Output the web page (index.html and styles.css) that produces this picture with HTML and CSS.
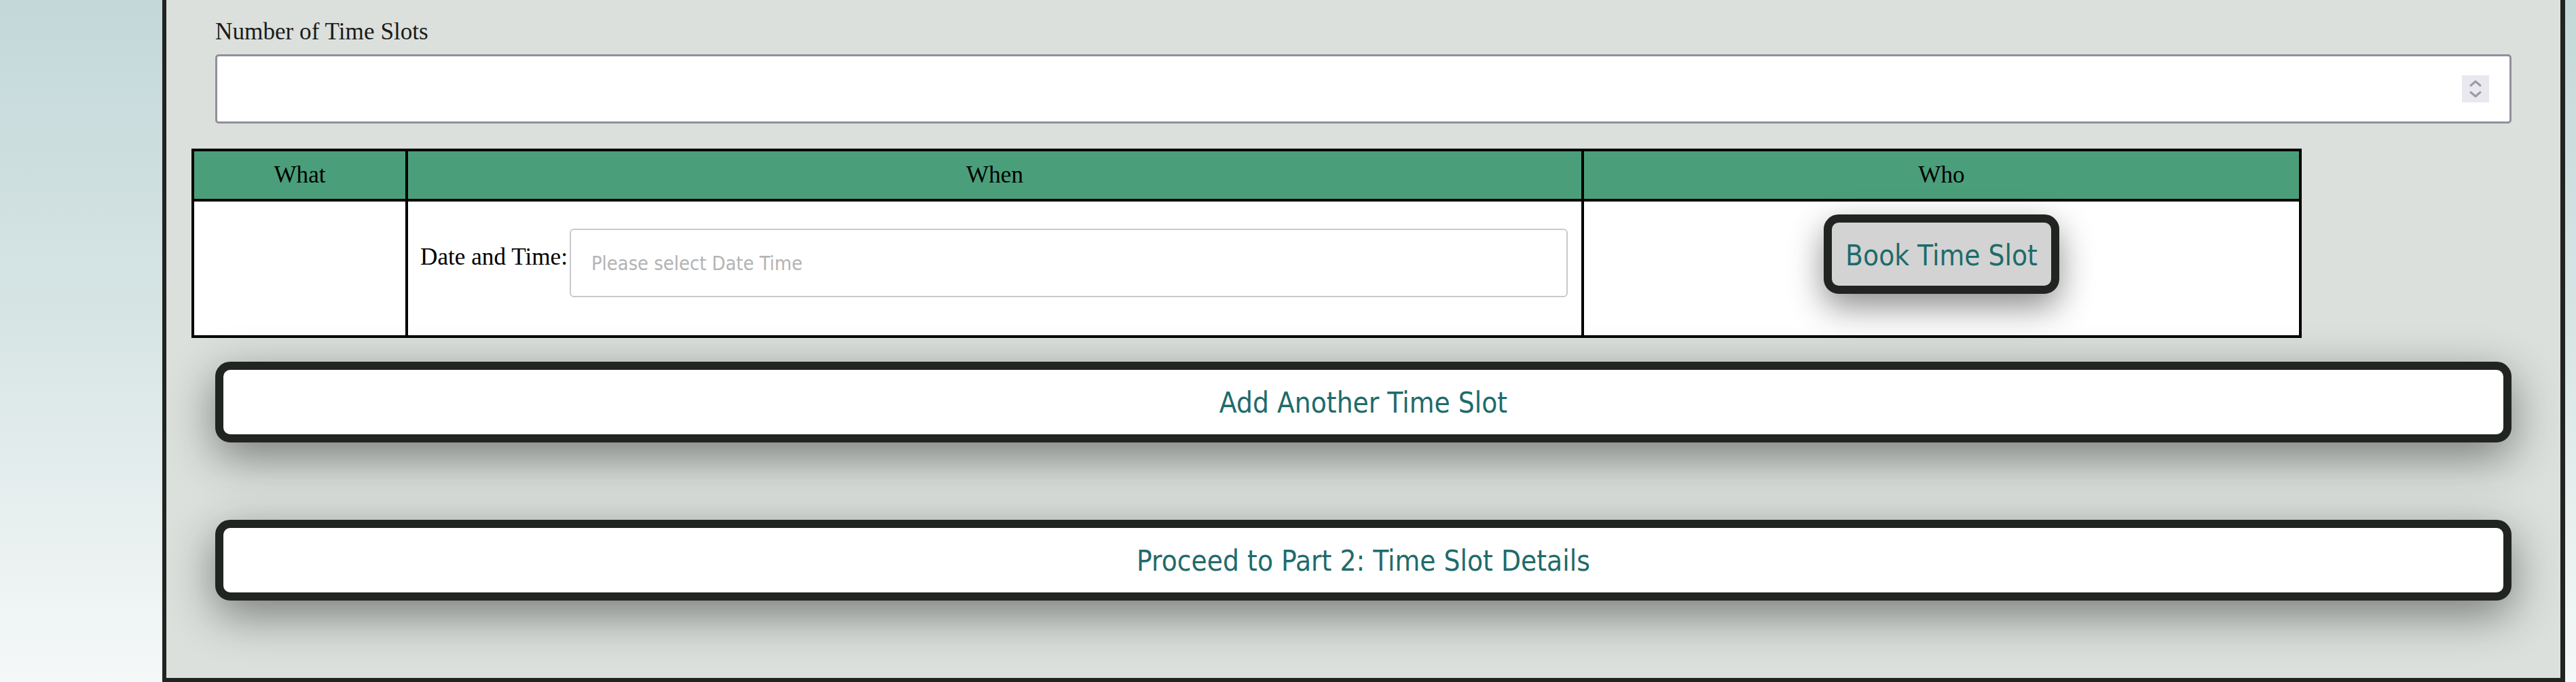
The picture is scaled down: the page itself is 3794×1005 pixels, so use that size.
FILE: index.html
```html
<!DOCTYPE html>
<html lang="en">
<head>
<meta charset="utf-8">
<title>Time Slots</title>
<link rel="stylesheet" href="styles.css">
</head>
<body>
<div class="page">
  <main class="panel">
    <div class="field">
      <label class="field-label" for="slots">Number of Time Slots</label>
      <div class="num-input">
        <input class="num-text" id="slots" type="text">
        <span class="spinner">
          <svg width="40" height="40" viewBox="0 0 40 40" aria-hidden="true">
            <path d="M13 15 L20 9 L27 15" fill="none" stroke="#9b99a6" stroke-width="3" stroke-linecap="round" stroke-linejoin="round"/>
            <path d="M13 25 L20 31 L27 25" fill="none" stroke="#9b99a6" stroke-width="3" stroke-linecap="round" stroke-linejoin="round"/>
          </svg>
        </span>
      </div>
    </div>

    <div class="table-wrap">
      <table class="slots">
        <thead>
          <tr>
            <th class="c-what">What</th>
            <th class="c-when">When</th>
            <th class="c-who">Who</th>
          </tr>
        </thead>
        <tbody>
          <tr>
            <td class="c-what"></td>
            <td class="c-when">
              <div class="dt">
                <span class="dt-label">Date and Time:</span>
                <input class="dt-input" type="text" placeholder="Please select Date Time">
              </div>
            </td>
            <td class="c-who who-cell">
              <button class="book-btn" type="button">Book Time Slot</button>
            </td>
          </tr>
        </tbody>
      </table>
    </div>

    <div class="actions first">
      <button class="wide-btn" type="button">Add Another Time Slot</button>
    </div>
    <div class="actions second">
      <button class="wide-btn" type="button">Proceed to Part 2: Time Slot Details</button>
    </div>
  </main>
</div>
</body>
</html>
```

FILE: styles.css
```css
html, body {
  margin: 0;
  height: 1005px;
  overflow: hidden;
}

body {
  background: linear-gradient(to bottom, #c4d8d9 0%, #d6e4e4 45%, #f5f8f8 100%);
  font-family: "Liberation Serif", "Times New Roman", serif;
  color: #141414;
}

.page {
  display: flex;
  padding-left: 239px;
  padding-right: 16px;
}

.panel {
  flex: 1;
  background: #dbe0dc;
  border-left: 6px solid #212421;
  border-right: 7px solid #212421;
  border-bottom: 6px solid #212421;
  padding-top: 27px;
  padding-bottom: 114px;
}

.field {
  padding: 0 72px;
}

.field-label {
  display: block;
  font-size: 35.2px;
  line-height: 40px;
  color: #1b1b1b;
}

.num-input {
  margin-top: 13px;
  height: 102px;
  box-sizing: border-box;
  border: 3px solid #918f9c;
  border-radius: 5px;
  background: #fff;
  display: flex;
  align-items: center;
  padding-right: 30px;
}

.num-text {
  flex: 1;
  min-width: 0;
  height: 100%;
  border: 0;
  outline: 0;
  background: transparent;
  font-family: "Liberation Sans", Arial, sans-serif;
  font-size: 32px;
}

.spinner {
  width: 40px;
  height: 40px;
  background: #e9e8ee;
  display: flex;
}

.table-wrap {
  margin-top: 37px;
  padding-left: 37px;
}

.slots {
  border-collapse: separate;
  border-spacing: 0;
  border: 4px solid #000;
  table-layout: fixed;
  width: 3108px;
  background: #fff;
}

.slots th,
.slots td {
  box-sizing: border-box;
  padding: 0;
  font-size: 35.2px;
  line-height: 40px;
  color: #000;
}

.slots th {
  height: 74px;
  background: #4a9f7a;
  font-weight: normal;
  text-align: center;
  vertical-align: middle;
  border-bottom: 4px solid #000;
}

.slots td {
  height: 197px;
  vertical-align: top;
}

.c-what {
  width: 315px;
  border-right: 4px solid #000;
}

.c-when {
  width: 1732px;
  border-right: 4px solid #000;
}

.c-who {
  width: 1053px;
}

.dt {
  display: flex;
  align-items: flex-start;
  padding: 40px 20px 0 18px;
}

.dt-label {
  margin-top: 22px;
  white-space: nowrap;
}

.dt-input {
  flex: 1;
  min-width: 0;
  margin: 0 0 0 3px;
  height: 101px;
  box-sizing: border-box;
  border: 2px solid #c9c9ce;
  border-radius: 6px;
  padding: 0 0 0 30px;
  background: #fff;
  font-family: "DejaVu Sans Condensed", "DejaVu Sans", sans-serif;
  font-stretch: condensed;
  font-size: 28.8px;
  outline: 0;
}

.dt-input::placeholder {
  color: #b3b3b3;
}

.who-cell {
  text-align: center;
  padding-top: 19px !important;
}

.book-btn {
  height: 117px;
  box-sizing: border-box;
  padding: 4px 20px 0;
  border: 12px solid #212421;
  border-radius: 22px;
  background: #d3d3d3;
  color: #1f6b6b;
  font-family: "DejaVu Sans Condensed", "DejaVu Sans", sans-serif;
  font-stretch: condensed;
  font-size: 42px;
  line-height: 1;
  box-shadow: 0 19px 50px rgba(0, 0, 0, 0.45);
}

.actions {
  padding: 0 72px;
}

.actions.first {
  margin-top: 35px;
}

.actions.second {
  margin-top: 114px;
}

.wide-btn {
  display: block;
  width: 100%;
  height: 119px;
  box-sizing: border-box;
  border: 12px solid #212421;
  border-radius: 22px;
  background: #fff;
  color: #1f6b6b;
  font-family: "DejaVu Sans Condensed", "DejaVu Sans", sans-serif;
  font-stretch: condensed;
  font-size: 42px;
  line-height: 1;
  padding-top: 4px;
  box-shadow: 0 21px 68px rgba(0, 0, 0, 0.45);
}
```
